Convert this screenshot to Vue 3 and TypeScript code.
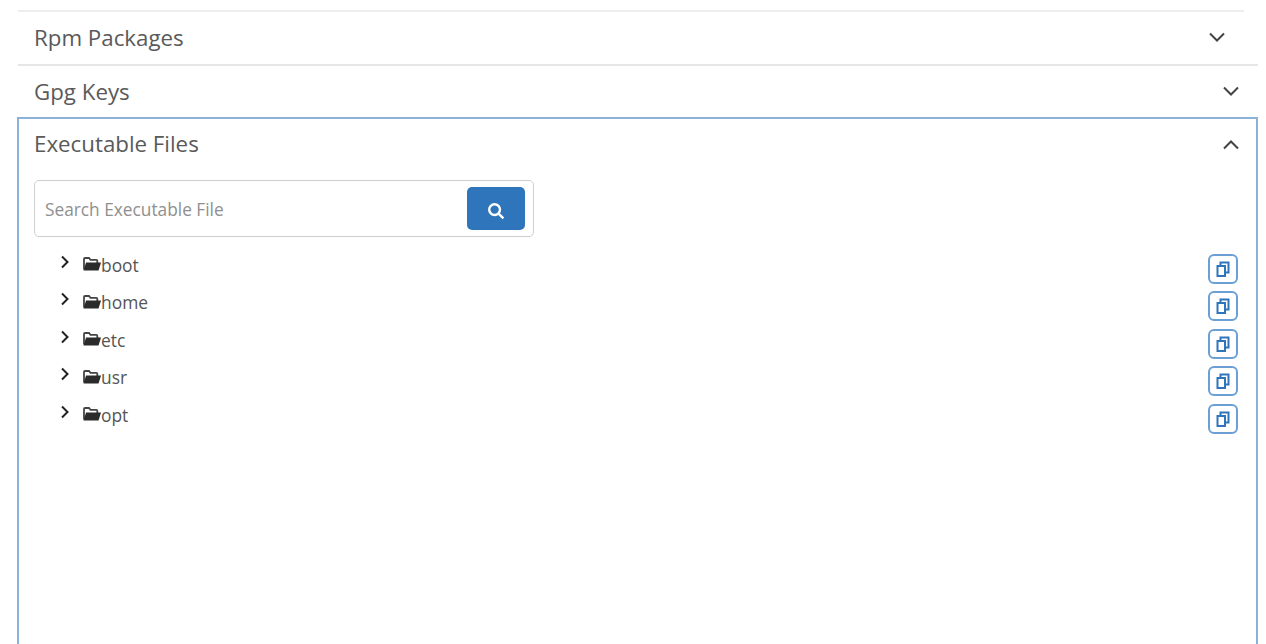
<script setup lang="ts">
const folders: string[] = ['boot', 'home', 'etc', 'usr', 'opt']
</script>

<template>
  <div class="page">
    <section class="row narrow">
      <h3>Rpm Packages</h3>
      <svg class="chev" viewBox="0 0 18 12" width="18" height="12"><path d="M2 2.5 9 9.5 16 2.5" /></svg>
    </section>
    <section class="row second">
      <h3>Gpg Keys</h3>
      <svg class="chev" viewBox="0 0 18 12" width="18" height="12"><path d="M2 2.5 9 9.5 16 2.5" /></svg>
    </section>
    <section class="panel">
      <div class="panel-head">
        <h3>Executable Files</h3>
        <svg class="chev up" viewBox="0 0 18 12" width="18" height="12"><path d="M2 9.5 9 2.5 16 9.5" /></svg>
      </div>
      <div class="search">
        <input class="search-input" type="text" placeholder="Search Executable File" />
        <button class="search-btn" type="button" aria-label="Search">
          <svg viewBox="0 0 18 18" width="18" height="18"><circle cx="7.6" cy="7.6" r="5.4" /><path d="M11.6 11.6 16.4 16.4" /></svg>
        </button>
      </div>
      <ul class="tree">
        <li v-for="name in folders" :key="name" class="node">
          <svg class="caret" viewBox="0 0 10 14" width="10" height="14"><path d="M2 1.5 7.5 7 2 12.5" /></svg>
          <svg class="folder" viewBox="0 0 18 14" width="18" height="14">
            <path class="folder-outline" d="M1 12.5V2C1 1.5 1.4 1 2 1H6l1.5 1.8h5.800c.6 0 1 .4 1 1V6" />
            <path class="folder-fill" d="M.5 13.500 3 5.500H18L15.500 13.500z" />
          </svg>
          <span class="label">{{ name }}</span>
          <button class="copy" type="button" aria-label="Copy">
            <svg viewBox="0 0 14 16" width="14" height="16">
              <rect x="1.500" y="5" width="7.500" height="10" />
              <path d="M4.500 4V1.500H12.500V11.500H9.500" />
            </svg>
          </button>
        </li>
      </ul>
    </section>
  </div>
</template>

<style scoped>
.page {
  height: 644px;
  overflow: hidden;
  padding: 10px 8px 0 18px;
  box-sizing: border-box;
  background: #fff;
  font-family: "Open Sans", sans-serif;
  color: #555;
}
h3 {
  margin: 0;
  font-size: 22.3px;
  line-height: 30px;
  font-weight: 400;
  color: #5a5a5a;
}
.row {
  height: 54px;
  box-sizing: border-box;
  border-top: 2px solid #e6e6e6;
  padding: 11px 18px 0 16px;
  display: flex;
  justify-content: space-between;
}
.row.second {
  height: 53px;
}
.row.narrow {
  margin-right: 14px;
  border-top-color: #eeeeee;
}
.chev {
  margin-top: 8px;
  fill: none;
  stroke: #444;
  stroke-width: 2;
}
.chev.up {
  margin-top: 10px;
}
.panel {
  height: 540px;
  box-sizing: border-box;
  margin-left: -1px;
  border: 2px solid #8db2d8;
  border-bottom: none;
  padding: 10px 0 0 15px;
}
.panel-head {
  display: flex;
  justify-content: space-between;
  padding-right: 16px;
}
.search {
  margin-top: 21px;
  width: 500px;
  height: 57px;
  box-sizing: border-box;
  border: 1px solid #cfcfcf;
  border-radius: 5px;
  display: flex;
  align-items: center;
  padding: 0 8px 0 10px;
}
.search-input {
  flex: 1;
  min-width: 0;
  border: none;
  outline: none;
  padding: 1px 0 0;
  font: 400 17.300px "Open Sans", sans-serif;
  color: #555;
}
.search-input::placeholder {
  color: #8f8f8f;
  opacity: 1;
}
.search-btn {
  width: 58px;
  height: 43px;
  border: none;
  border-radius: 5px;
  background: #2f75bb;
  display: flex;
  align-items: center;
  justify-content: center;
  padding: 4px 0 0;
}
.search-btn svg {
  fill: none;
  stroke: #fff;
  stroke-width: 2.400;
}
.tree {
  list-style: none;
  margin: 13px 0 0;
  padding: 0 18px 0 26px;
}
.node {
  height: 37.5px;
  display: flex;
  align-items: center;
  font-size: 17.400px;
  color: #555;
}
.caret {
  margin-top: -14px;
  fill: none;
  stroke: #222;
  stroke-width: 2;
}
.folder {
  margin-left: 13px;
  margin-top: -9px;
}
.folder-outline {
  fill: none;
  stroke: #444;
  stroke-width: 1.800;
}
.folder-fill {
  fill: #2b2b2b;
}
.label {
  flex: 1;
  margin-left: 0;
  margin-top: -8px;
}
.copy {
  width: 30px;
  height: 30px;
  box-sizing: border-box;
  border: 2px solid #6aa0d6;
  border-radius: 6px;
  background: #fff;
  display: flex;
  align-items: center;
  justify-content: center;
  padding: 0;
}
.copy svg {
  fill: none;
  stroke: #2f75bb;
  stroke-width: 2;
}
</style>
